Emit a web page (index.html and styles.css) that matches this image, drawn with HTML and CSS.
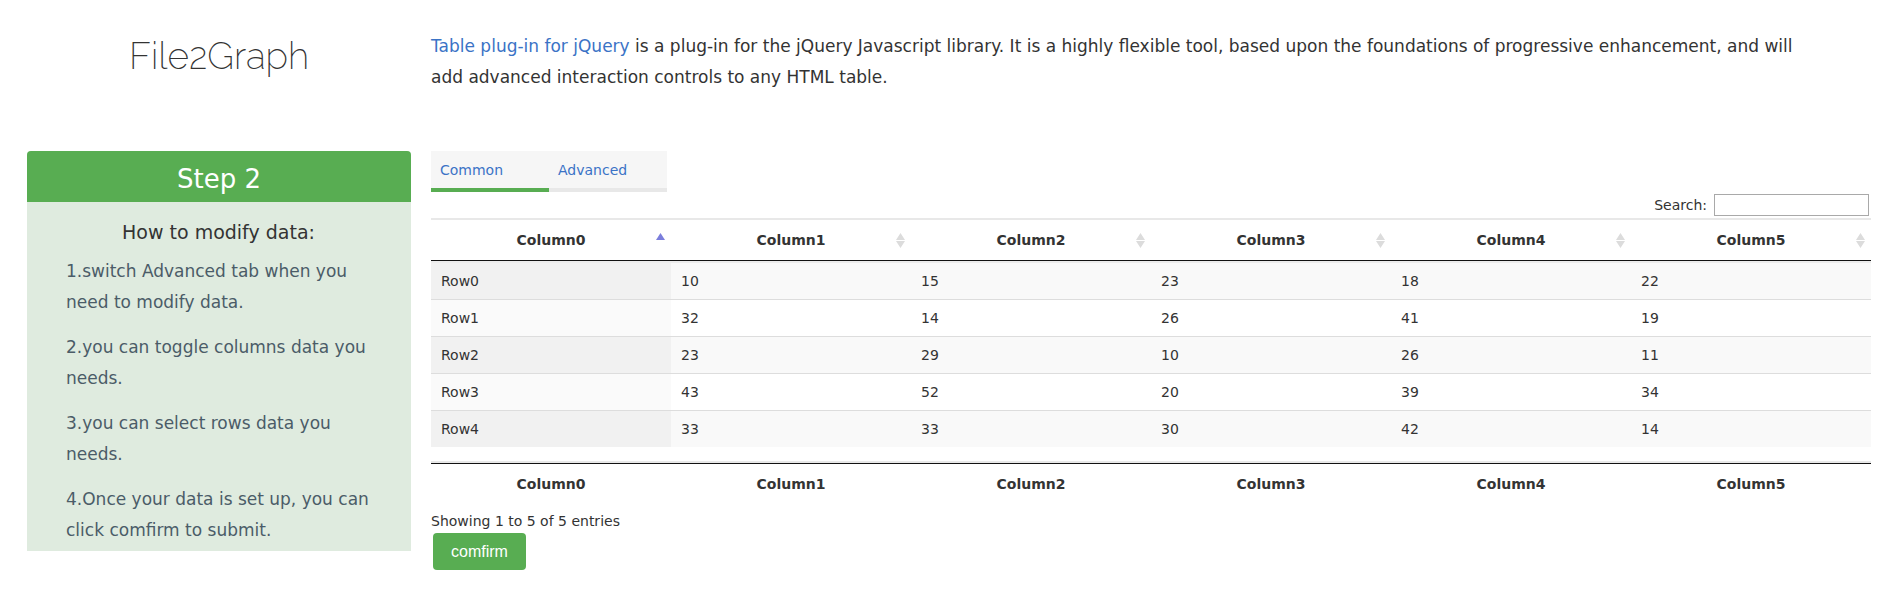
FILE: index.html
```
<!DOCTYPE html>
<html lang="en">
<head>
<meta charset="utf-8">
<title>File2Graph</title>
<link rel="stylesheet" href="styles.css">
</head>
<body>
<div class="page">
  <header class="brand"><h1 class="brand-name">File2Graph</h1></header>
  <p class="intro"><a href="#">Table plug-in for jQuery</a> is a plug-in for the jQuery Javascript library. It is a highly flexible tool, based upon the foundations of progressive enhancement, and will add advanced interaction controls to any HTML table.</p>
  <aside class="guide">
    <h2 class="guide-title">Step 2</h2>
    <div class="guide-body">
      <h3 class="guide-heading">How to modify data:</h3>
      <p>1.switch Advanced tab when you need to modify data.</p>
      <p>2.you can toggle columns data you needs.</p>
      <p>3.you can select rows data you needs.</p>
      <p>4.Once your data is set up, you can click comfirm to submit.</p>
    </div>
  </aside>
  <main class="content">
    <nav class="tabs">
      <a class="tab tab-active" href="#">Common</a>
      <a class="tab" href="#">Advanced</a>
    </nav>
    <div class="filter">
      <label for="search">Search:</label>
      <input id="search" type="search">
    </div>
    <table class="data">
      <thead>
        <tr>
          <th class="sorted">Column0<svg class="sort" viewBox="0 0 9 16"><path class="up" d="M4.5 0 9 7H0z"/></svg></th>
          <th>Column1<svg class="sort" viewBox="0 0 9 16"><path d="M4.5 0 9 7H0zM0 8h9L4.500 15z"/></svg></th>
          <th>Column2<svg class="sort" viewBox="0 0 9 16"><path d="M4.5 0 9 7H0zM0 8h9L4.500 15z"/></svg></th>
          <th>Column3<svg class="sort" viewBox="0 0 9 16"><path d="M4.5 0 9 7H0zM0 8h9L4.500 15z"/></svg></th>
          <th>Column4<svg class="sort" viewBox="0 0 9 16"><path d="M4.5 0 9 7H0zM0 8h9L4.500 15z"/></svg></th>
          <th>Column5<svg class="sort" viewBox="0 0 9 16"><path d="M4.5 0 9 7H0zM0 8h9L4.500 15z"/></svg></th>
        </tr>
      </thead>
      <tbody>
        <tr><td>Row0</td><td>10</td><td>15</td><td>23</td><td>18</td><td>22</td></tr>
        <tr><td>Row1</td><td>32</td><td>14</td><td>26</td><td>41</td><td>19</td></tr>
        <tr><td>Row2</td><td>23</td><td>29</td><td>10</td><td>26</td><td>11</td></tr>
        <tr><td>Row3</td><td>43</td><td>52</td><td>20</td><td>39</td><td>34</td></tr>
        <tr><td>Row4</td><td>33</td><td>33</td><td>30</td><td>42</td><td>14</td></tr>
      </tbody>
    </table>
    <table class="data data-footer">
      <tfoot>
        <tr><th>Column0</th><th>Column1</th><th>Column2</th><th>Column3</th><th>Column4</th><th>Column5</th></tr>
      </tfoot>
    </table>
    <div class="info">Showing 1 to 5 of 5 entries</div>
    <button class="confirm" type="button">comfirm</button>
  </main>
</div>
</body>
</html>
```
FILE: styles.css
```
* { box-sizing: border-box; }
body {
  margin: 0;
  background: #fff;
  color: #333;
  font-family: Verdana, "DejaVu Sans", sans-serif;
  font-size: 14px;
}
h1, h2, h3, p { margin: 0; font-weight: 400; }
a { color: #3b73c6; text-decoration: none; }

.page {
  display: grid;
  grid-template-columns: 384fr 1440fr;
  grid-template-rows: 120px auto;
  column-gap: 20px;
  padding: 31px 17px 24px 27px;
  align-items: start;
}
.brand { text-align: center; }
.brand-name {
  font-family: Raleway, Lato, sans-serif;
  font-weight: 200;
  font-size: 37px;
  line-height: 50px;
}
.intro { padding-right: 48px; font-size: 17px; line-height: 31px; }

.guide { background: #dfebdf; border-radius: 4px 4px 0 0; overflow: hidden; }
.guide-title {
  background: #58ad52;
  color: #fff;
  font-size: 26px;
  line-height: 51px;
  padding-top: 3px;
  height: 51px;
  text-align: center;
}
.guide-body {
  display: grid;
  gap: 14px;
  padding: 14px 32px 5px 39px;
  color: #4b5c68;
  font-size: 17px;
  line-height: 31px;
}
.guide-heading {
  color: #333;
  font-size: 19px;
  line-height: 32px;
  margin: 0 0 -6px -8px;
  text-align: center;
}

.tabs { display: flex; }
.tab {
  width: 118px;
  padding: 9px 9px 8px;
  line-height: 20px;
  background: #f6f6f6;
  border-bottom: 4px solid #e8e8e8;
}
.tab-active { border-bottom-color: #58ad52; }

.filter {
  display: flex;
  justify-content: flex-end;
  align-items: center;
  gap: 7px;
  padding: 2px 2px 2px 0;
}
.filter input {
  width: 155px;
  height: 22px;
  border: 1px solid #a9a9a9;
  background: #fff;
  appearance: none;
}

.data {
  width: 100%;
  table-layout: fixed;
  border-collapse: separate;
  border-spacing: 0;
  line-height: 20px;
}
.data th, .data td { padding: 8px 10px; }
.data td { text-align: left; border-top: 1px solid #ddd; }
.data thead th {
  position: relative;
  padding: 10px;
  border-top: 2px solid #e8e8e8;
  border-bottom: 1px solid #111;
}
.data tbody tr:first-child td { border-top: 2px solid #ececec; }
.data tbody tr:nth-child(odd) { background: #f9f9f9; }
.data tbody td:first-child { background: #fafafa; }
.data tbody tr:nth-child(odd) td:first-child { background: #f1f1f1; }
.sort {
  position: absolute;
  top: 13px;
  right: 6px;
  width: 9px;
  height: 16px;
  fill: #dcdcdc;
}
.sort .up { fill: #7b7edc; }
.data-footer {
  margin-top: 14px;
  border-top: 2px solid #e8e8e8;
}
.data-footer th { padding: 10px; border-top: 1px solid #111; }

.info { padding-top: 7px; line-height: 20px; }
.confirm {
  display: block;
  margin: 2px;
  padding: 0 18px;
  height: 37px;
  border: 0;
  border-radius: 4px;
  background: #58ad52;
  color: #fff;
  font: 16px "Liberation Sans", Arial, sans-serif;
}
```
